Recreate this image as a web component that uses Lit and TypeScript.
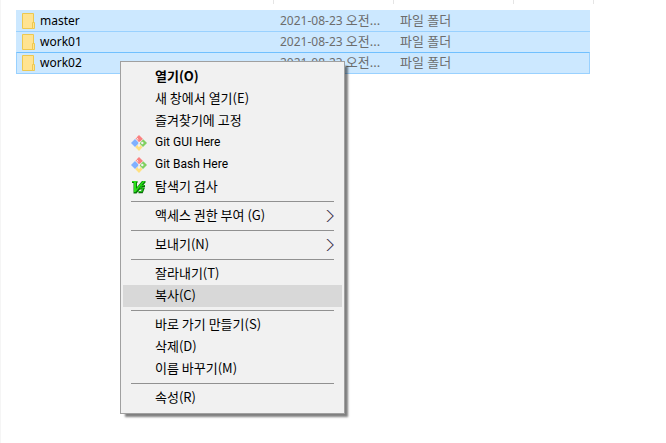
import { LitElement, html, css, svg, nothing } from "lit";
import { customElement } from "lit/decorators.js";
import { classMap } from "lit/directives/class-map.js";

type Item = {
  label: string;
  icon?: "git" | "vim";
  bold?: boolean;
  active?: boolean;
  submenu?: boolean;
};

const groups: Item[][] = [
  [
    { label: "열기(O)", bold: true },
    { label: "새 창에서 열기(E)" },
    { label: "즐겨찾기에 고정" },
    { label: "Git GUI Here", icon: "git" },
    { label: "Git Bash Here", icon: "git" },
    { label: "탐색기 검사", icon: "vim" },
  ],
  [{ label: "액세스 권한 부여 (G)", submenu: true }],
  [{ label: "보내기(N)", submenu: true }],
  [{ label: "잘라내기(T)" }, { label: "복사(C)", active: true }],
  [
    { label: "바로 가기 만들기(S)" },
    { label: "삭제(D)" },
    { label: "이름 바꾸기(M)" },
  ],
  [{ label: "속성(R)" }],
];

const gitIcon = svg`<svg width="16" height="16" viewBox="0 0 16 16">
  <path d="M8 0 12 4 8.500 7 4.500 3.500Z" fill="#fa8080"/>
  <path d="M12.200 4.200 16 8 12 12 8.500 8.500Z" fill="#80d060"/>
  <path d="M8 8.500 11.500 12.200 8 16 4.200 12Z" fill="#ffe080"/>
  <path d="M4 4 8 8 4 12 0 8Z" fill="#80b0ff"/>
  <path d="M5.500 2.500 8 5.500V10" fill="none" stroke="#f4f4f4" stroke-width="1"/>
  <circle cx="8" cy="5.500" r="1.200" fill="#fa8080"/>
  <circle cx="11.300" cy="8" r="1.200" fill="#f1f1f1"/>
  <circle cx="8" cy="10.500" r="1.200" fill="#f1f1f1"/>
</svg>`;

const vimIcon = svg`<svg width="16" height="16" viewBox="0 0 16 16">
  <path d="M1 2H6.500V4H6V8L11 2H14.500V3.500L5.500 14.500H2.500V4H1Z" fill="#0a7a0a"/>
  <path d="M1 2H6V3H5V10L12 2H14L4.500 13H3V3H1Z" fill="#2be01a"/>
  <path d="M14 7H11L9.800 9.500H12.500L11 13.200H7.500" fill="none" stroke="#0a6a0a" stroke-width="2"/>
  <path d="M13.500 6.500H10.500L9.500 9H12L10.800 12.500H7.500" fill="none" stroke="#22c814" stroke-width="1.200"/>
</svg>`;

const folderIcon = svg`<svg width="13" height="16" viewBox="0 0 13 16">
  <path d="M.500.500H11.500V15.500H.500Z" fill="#ffe391" stroke="#edc850"/>
  <path d="M10.500 9.500H12.500V15.500H10.500Z" fill="#ffe391" stroke="#edc850"/>
</svg>`;

const arrowIcon = svg`<svg width="10" height="14" viewBox="0 0 10 14">
  <path d="M1.500 1 7.500 7 1.500 13" fill="none" stroke="#e0903c" stroke-width=".8"/>
  <path d="M2.700 1 8.700 7 2.700 13" fill="none" stroke="#3c88e8" stroke-width=".8"/>
  <path d="M2.100 1 8.100 7 2.100 13" fill="none" stroke="#3a1838" stroke-width=".7"/>
</svg>`;

@customElement("file-list")
export class FileList extends LitElement {
  static styles = css`
    :host {
      display: block;
      padding: 0 76px 0 16px;
    }
    .header {
      display: grid;
      grid-template-columns: 257px 119px 119px 79px;
      column-gap: 1px;
      width: 578px;
      height: 4px;
      margin-bottom: 6px;
    }
    .edge {
      border-right: 1px solid #e5e5e5;
      margin-right: -1px;
    }
    table {
      width: 100%;
      table-layout: fixed;
      border-collapse: separate;
      border-spacing: 0;
      background: #cce8ff;
      color: #6d6d6d;
      font-size: 12px;
      line-height: 20px;
    }
    .name-col {
      width: 258px;
    }
    .date-col {
      width: 120px;
    }
    th,
    td {
      box-sizing: border-box;
      height: 21px;
      padding: 0 0 0 6px;
      border-top: 1px solid #99d1ff;
      text-align: left;
      font-weight: 400;
      white-space: nowrap;
    }
    tr:first-child > * {
      border-top-color: #cce8ff;
    }
    .focused > * {
      height: 22px;
      border-top-color: #70c0ff;
      border-bottom: 1px solid #99d1ff;
    }
    .focused > :first-child {
      border-left: 1px solid #99d1ff;
      padding-left: 5px;
    }
    .focused > :last-child {
      border-right: 1px solid #99d1ff;
    }
    th {
      color: #000;
    }
    td {
      vertical-align: top;
    }
    .name {
      display: flex;
      align-items: center;
      gap: 5px;
    }
    .hangul {
      font-size: 13px;
      line-height: 12px;
    }
  `;

  render() {
    return html`
      <div class="header">
        <div class="edge"></div>
        <div class="edge"></div>
        <div class="edge"></div>
        <div class="edge"></div>
      </div>
      <table>
        <colgroup>
          <col class="name-col" />
          <col class="date-col" />
          <col />
        </colgroup>
        <tbody>
          ${["master", "work01", "work02"].map(
            (name, i) => html`<tr class=${classMap({ focused: i === 2 })}>
              <th scope="row"><div class="name">${folderIcon}${name}</div></th>
              <td>2021-08-23 <span class="hangul">오전...</span></td>
              <td><span class="hangul">파일 폴더</span></td>
            </tr>`
          )}
        </tbody>
      </table>
    `;
  }
}

@customElement("context-menu")
export class ContextMenu extends LitElement {
  static styles = css`
    :host {
      display: block;
      box-sizing: border-box;
      width: 225px;
      padding: 4px 2px;
      border: 1px solid #a0a0a0;
      background: #f1f1f1;
      box-shadow: 4px 4px 2px -1px rgba(0, 0, 0, 0.5);
      font: 13px/20px "Noto Sans CJK KR", sans-serif;
    }
    .group + .group::before {
      content: "";
      display: block;
      height: 1px;
      margin: 3px 8px;
      background: #919191;
    }
    .item {
      display: grid;
      grid-template-columns: 16px 1fr 10px;
      column-gap: 8px;
      align-items: center;
      width: 100%;
      height: 22px;
      padding: 0 7px 0 8px;
      border: 0;
      background: none;
      color: #000;
      font: inherit;
      text-align: left;
    }
    .item:hover,
    .active {
      background: #d8d8d8;
    }
    .label {
      padding-bottom: 2px;
    }
    .bold {
      font-weight: 700;
    }
    .latin {
      font-family: Roboto, sans-serif;
      font-size: 12px;
    }
    svg {
      display: block;
    }
  `;

  render() {
    return html`<div role="menu">
      ${groups.map(
        (items) => html`<div class="group" role="group">
          ${items.map(
            (item) => html`<button
              type="button"
              role="menuitem"
              class=${classMap({
                item: true,
                bold: !!item.bold,
                active: !!item.active,
                latin: item.icon === "git",
              })}
            >
              <span>${item.icon === "git" ? gitIcon : item.icon === "vim" ? vimIcon : nothing}</span>
              <span class="label">${item.label}</span>
              ${item.submenu ? arrowIcon : nothing}
            </button>`
          )}
        </div>`
      )}
    </div>`;
  }
}

@customElement("app-root")
export class AppRoot extends LitElement {
  static styles = css`
    :host {
      display: block;
      position: relative;
      box-sizing: border-box;
      min-height: 100vh;
      border-left: 1px solid #f5f5f5;
      margin: 0;
      background: #fff;
      font: 12px/20px "Noto Sans", "Noto Sans CJK KR", sans-serif;
    }
    file-list {
      margin-left: -1px;
    }
    context-menu {
      position: absolute;
      top: 61px;
      left: 119px;
    }
  `;

  render() {
    return html`<file-list></file-list><context-menu></context-menu>`;
  }
}
